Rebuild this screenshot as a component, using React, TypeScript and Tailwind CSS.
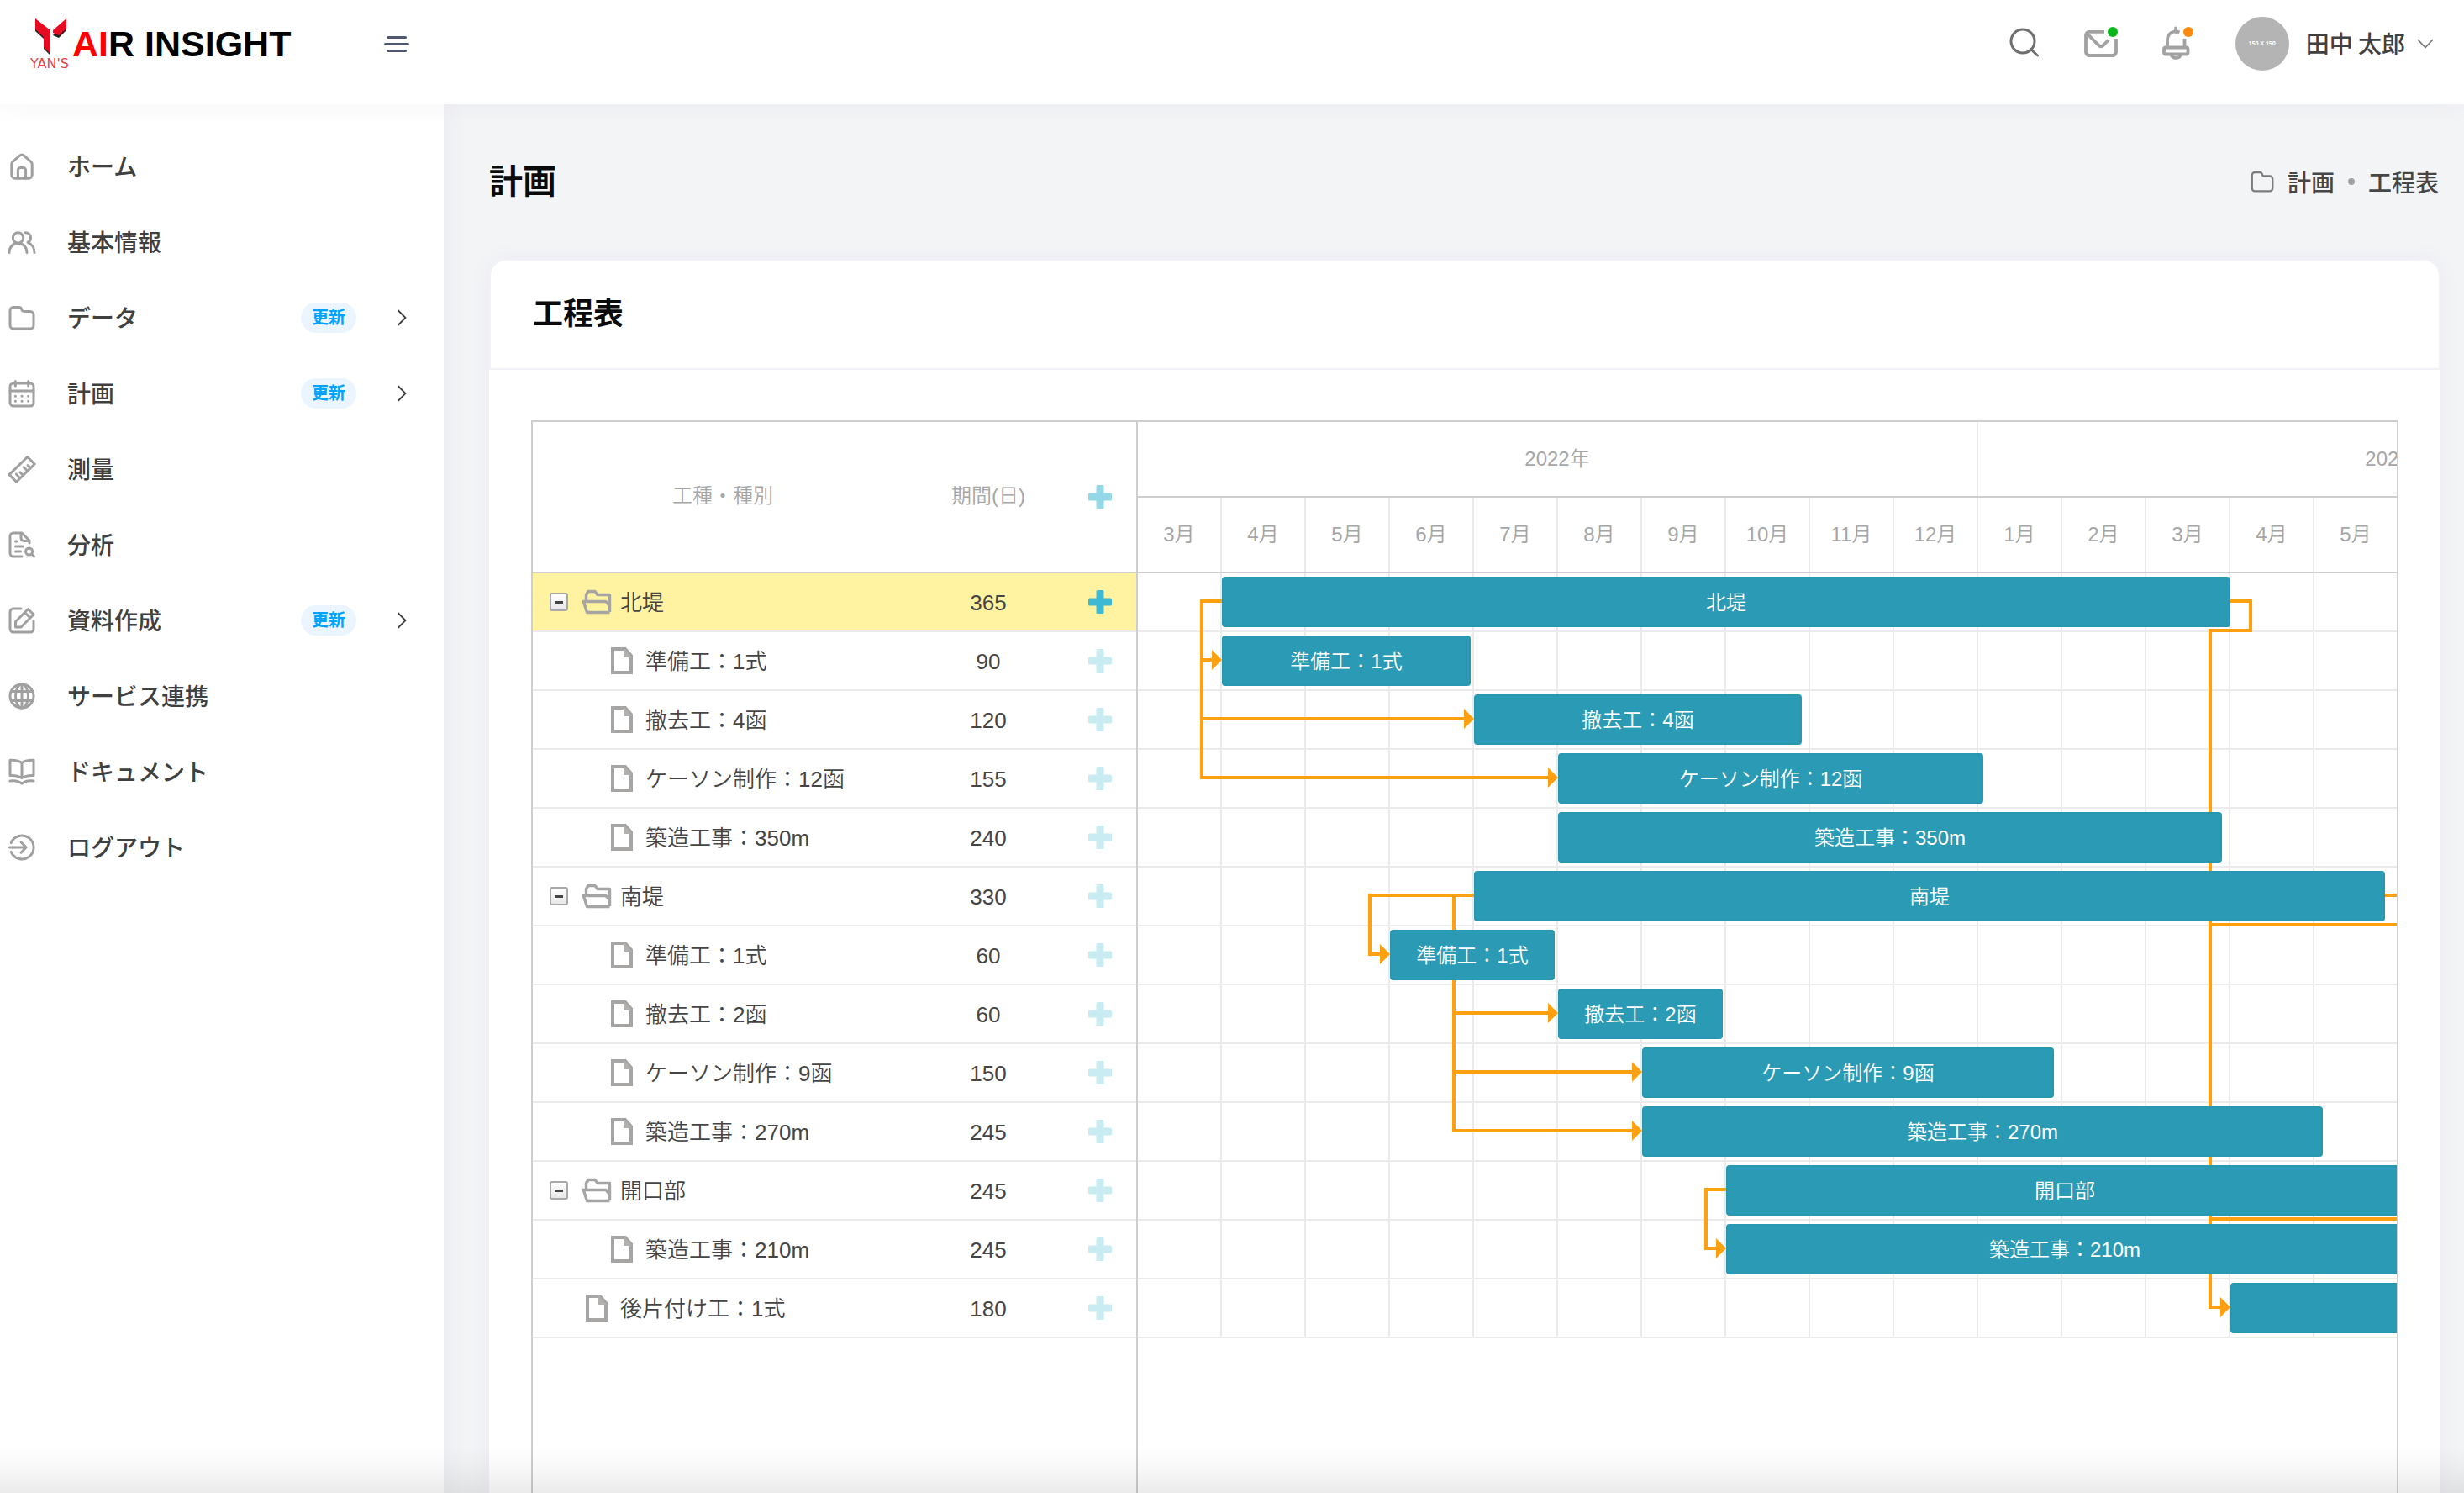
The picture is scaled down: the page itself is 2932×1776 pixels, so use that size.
import React, { useState } from "react";
import { clsx } from "clsx";

/* -------------------------------------------------------------------------- */
/*                                    Data                                    */
/* -------------------------------------------------------------------------- */

type IconName =
  | "home"
  | "users"
  | "folder"
  | "calendar"
  | "ruler"
  | "report"
  | "edit"
  | "globe"
  | "book"
  | "logout";

type Task = {
  id: number;
  name: string;
  days: number;
  kind: "group" | "child" | "single";
  start: number;
  width: number;
};

const menu: { label: string; icon: IconName; updated?: boolean }[] = [
  { label: "ホーム", icon: "home" },
  { label: "基本情報", icon: "users" },
  { label: "データ", icon: "folder", updated: true },
  { label: "計画", icon: "calendar", updated: true },
  { label: "測量", icon: "ruler" },
  { label: "分析", icon: "report" },
  { label: "資料作成", icon: "edit", updated: true },
  { label: "サービス連携", icon: "globe" },
  { label: "ドキュメント", icon: "book" },
  { label: "ログアウト", icon: "logout" },
];

// start and width are in timeline pixels, one month is 100
const tasks: Task[] = [
  { id: 1, name: "北堤", days: 365, kind: "group", start: 100, width: 1200 },
  { id: 2, name: "準備工：1式", days: 90, kind: "child", start: 100, width: 296 },
  { id: 3, name: "撤去工：4函", days: 120, kind: "child", start: 400, width: 390 },
  { id: 4, name: "ケーソン制作：12函", days: 155, kind: "child", start: 500, width: 506 },
  { id: 5, name: "築造工事：350m", days: 240, kind: "child", start: 500, width: 790 },
  { id: 6, name: "南堤", days: 330, kind: "group", start: 400, width: 1084 },
  { id: 7, name: "準備工：1式", days: 60, kind: "child", start: 300, width: 196 },
  { id: 8, name: "撤去工：2函", days: 60, kind: "child", start: 500, width: 196 },
  { id: 9, name: "ケーソン制作：9函", days: 150, kind: "child", start: 600, width: 490 },
  { id: 10, name: "築造工事：270m", days: 245, kind: "child", start: 600, width: 810 },
  { id: 11, name: "開口部", days: 245, kind: "group", start: 700, width: 806 },
  { id: 12, name: "築造工事：210m", days: 245, kind: "child", start: 700, width: 806 },
  { id: 13, name: "後片付け工：1式", days: 180, kind: "single", start: 1300, width: 590 },
];

const years = ["2022年", "2023年"];
const months = [3, 4, 5, 6, 7, 8, 9, 10, 11, 12, 1, 2, 3, 4, 5];

const links = [
  "M100 33H76V103H88",
  "M76 103V173H388",
  "M76 173V243H488",
  "M400 383H276V453H288",
  "M376 383V523H488",
  "M376 523V593H588",
  "M376 593V663H588",
  "M700 733H676V803H688",
  "M1300 33H1324V68H1276V873H1288",
  "M1484 383H1508V418H1276",
  "M1506 768H1276",
];

const arrows = [
  [100, 103],
  [400, 173],
  [500, 243],
  [300, 453],
  [500, 523],
  [600, 593],
  [600, 663],
  [700, 803],
  [1300, 873],
];

/* -------------------------------------------------------------------------- */
/*                                   Icons                                    */
/* -------------------------------------------------------------------------- */

const FOLDER =
  "M6 3.4h6.6c1.6 0 2.5.7 2.9 2l.5 1.5c.4 1.2 1.1 1.7 2.4 1.7H26a4 4 0 0 1 4 4V25a4 4 0 0 1-4 4H6a4 4 0 0 1-4-4V7.4a4 4 0 0 1 4-4Z";

const iconShapes: Record<IconName, React.ReactNode> = {
  home: (
    <>
      <path d="M3.8 13.4a4 4 0 0 1 1.4-3l8.3-7.2a3.8 3.8 0 0 1 5 0l8.3 7.2a4 4 0 0 1 1.4 3v12.8a4 4 0 0 1-4 4H7.8a4 4 0 0 1-4-4Z" />
      <path d="M11.4 30V20.500a3 3 0 0 1 3-3h3.200a3 3 0 0 1 3 3V30" />
    </>
  ),
  users: (
    <>
      <circle cx="11.5" cy="11" r="6.2" />
      <path d="M1 28.500C1 21.800 5.700 17.300 11.500 17.300S22 21.800 22 28.500" />
      <path d="M20 4.800c4 0 6.600 2.900 6.600 6.100 0 2.600-1.500 4.500-3.600 5.500 4.800 1.800 8 6.500 8 12.100" />
    </>
  ),
  folder: <path d={FOLDER} />,
  calendar: (
    <>
      <rect x="2" y="4" width="28" height="27" rx="4" />
      <path d="M2 13h28M8.300 1.500V7M23.700 1.500V7" />
      <path d="M8.300 19.200h.1M16 19.200h.1M23.600 19.200h.1M8.300 25.200h.1M16 25.200h.1M23.600 25.200h.1" />
    </>
  ),
  ruler: (
    <>
      <path d="M22.700 1.500 31.200 10 9.600 31.200 1 22.600Z" />
      <path d="m9.400 22 3.700 4.200M14 19.800l2.200 2.300M18.200 13.800l4 4M23 11.500l2.300 2.200" />
    </>
  ),
  report: (
    <>
      <path d="M16 30H6a4 4 0 0 1-4-4V6a4 4 0 0 1 4-4h10l9 9v3" />
      <path d="M15 2.500V8a3.500 3.500 0 0 0 3.500 3.500H24M8.500 12h1.500M8.500 18h9M8.500 24h6" />
      <circle cx="24.6" cy="24" r="4" />
      <path d="m27.600 27 3 3" />
    </>
  ),
  edit: (
    <>
      <path d="M15 2H6a4 4 0 0 0-4 4v20a4 4 0 0 0 4 4h20a4 4 0 0 0 4-4v-9" />
      <path d="M8.500 17.500 23.500 2.500l6.500 6.500-15 15H8.500ZM19.500 6.500 26 13" />
    </>
  ),
  globe: (
    <>
      <circle cx="16" cy="16" r="14" />
      <ellipse cx="16" cy="16" rx="7.5" ry="14" />
      <path d="M16 2v28M4 10.500h24M4 21.500h24" />
    </>
  ),
  book: (
    <>
      <path d="M16 5.500C13 3 7.500 2 2 2.200V20.500c5.500-.2 11 .7 14 3.200 3-2.500 8.500-3.400 14-3.200V2.200C24.500 2 19 3 16 5.500ZM16 5.500v18" />
      <path d="M2 27c5.500-.6 10.500 0 14 3.200 3.500-3.200 8.500-3.800 14-3.200" />
    </>
  ),
  logout: (
    <>
      <path d="M3.200 10.500a14 14 0 1 1 0 11" />
      <path d="M1.500 16H21M15 9.800 21.200 16 15 22.200" />
    </>
  ),
};

function Icon({ name }: { name: IconName }) {
  return (
    <svg
      viewBox="0 0 32 32"
      className="size-8 shrink-0 overflow-visible text-[#a0a0a0]"
      fill="none"
      stroke="currentColor"
      strokeWidth="3"
      strokeLinecap="round"
      strokeLinejoin="round"
    >
      {iconShapes[name]}
    </svg>
  );
}

function PlusIcon() {
  return (
    <svg viewBox="0 0 28 28" className="size-7" fill="currentColor">
      <rect x="9.5" width="9" height="28" rx="1.5" />
      <rect y="9.5" width="28" height="9" rx="1.5" />
    </svg>
  );
}

function OpenFolderIcon() {
  return (
    <svg viewBox="0 0 36 30" className="h-[30px] w-9" fill="none" stroke="#a6a5a3" strokeWidth="3.4" strokeLinejoin="round">
      <path d="M5.500 13.500V6.500L8 2.500H16L19 6.500H33.500V27" />
      <path d="M1 14.500H29L33.500 20M2.500 15 6.500 27.500H33.500" />
    </svg>
  );
}

function FileIcon() {
  return (
    <svg viewBox="0 0 26 32" className="h-8 w-[26px]">
      <path d="M2 2H17L24 10V30H2Z" fill="#fff" stroke="#a6a5a3" strokeWidth="4" />
      <path d="M15 1V12H25Z" fill="#b1b0ae" />
    </svg>
  );
}

/* -------------------------------------------------------------------------- */
/*                                   Header                                   */
/* -------------------------------------------------------------------------- */

function Header() {
  return (
    <header className="relative z-20 flex h-[124px] shrink-0 items-center justify-between bg-white pb-5 shadow-[0_0_30px_rgba(82,63,125,0.05)]">
      <div className="flex w-[528px] items-center justify-between pr-[41px] pl-9">
        <a href="#" className="flex items-center">
          <span className="flex h-[60px] w-[50px] flex-col justify-between">
            <svg viewBox="0 0 50 44" className="h-11 w-[50px] shrink-0">
              <path d="M6 2 24 16V44L16 36V24L6 15Z" fill="#222" />
              <path d="M43 2V14L34 23 27 20Z" fill="#222" />
              <path d="M6 0 24 14V42L16 34V22L6 13Z" fill="#e60a22" />
              <path d="M43 0V12L34 20 27 17V14Z" fill="#e60a22" />
            </svg>
            <span className="font-['DejaVu_Sans'] text-[16px] leading-[12px] text-[#e8404a]">YAN'S</span>
          </span>
          <span className="font-['Liberation_Sans'] text-[43px] leading-[48px] font-bold whitespace-nowrap text-black">
            <span className="text-[#ff0000]">AI</span>R INSIGHT
          </span>
        </a>
        <button aria-label="メニュー" className="flex flex-col items-center gap-[5px]">
          <span className="h-[3px] w-6 rounded-full bg-[#505870]" />
          <span className="h-[3px] w-[30px] rounded-full bg-[#505870]" />
          <span className="h-[3px] w-6 rounded-full bg-[#505870]" />
        </button>
      </div>

      {/* User actions */}
      <div className="flex items-center gap-[50px] pr-9">
        <button aria-label="検索">
          <svg viewBox="0 0 40 40" className="size-10" fill="none" stroke="#6f6f6f" strokeWidth="3" strokeLinecap="round">
            <circle cx="17" cy="17" r="14" />
            <path d="m27 27 7.500 7" />
          </svg>
        </button>
        <button aria-label="メール">
          <svg viewBox="0 0 40 40" className="size-10" fill="none" stroke="#a2a2a2" strokeWidth="3.8">
            <path d="M24 5.800H6a4 4 0 0 0-4 4V30a4 4 0 0 0 4 4h28a4 4 0 0 0 4-4V14" />
            <path d="m4.500 9 13 13.200a3.500 3.500 0 0 0 5 0L29 15.500" />
            <circle cx="34" cy="6" r="6" fill="#0ab81e" stroke="none" />
          </svg>
        </button>
        <button aria-label="通知">
          <svg viewBox="0 0 40 40" className="size-10 overflow-visible" fill="none" stroke="#a2a2a2" strokeWidth="3.8">
            <path d="M19 1.500V6" strokeLinecap="round" />
            <path d="M9 24V15.500a10 10 0 0 1 14.500-9M29.500 14v10" />
            <rect x="5" y="24.5" width="28.5" height="8" rx="2" />
            <path d="M13.500 33a6 5.500 0 0 0 11.500 0" />
            <circle cx="34" cy="6" r="6" fill="#ff8a0c" stroke="none" />
          </svg>
        </button>
        <button className="flex items-center">
          <span className="flex size-16 items-center justify-center rounded-full bg-[#b4b4b4] font-['Open_Sans'] text-[7px] font-bold text-white">
            150 X 150
          </span>
          <span className="ml-5 pb-[2px] text-[28px] leading-10 font-medium whitespace-nowrap text-[#3f4040]">
            田中 太郎
          </span>
          <svg viewBox="0 0 20 12" className="ml-[14px] h-3 w-5" fill="none" stroke="#777" strokeWidth="1.8">
            <path d="m1 1 9 9.500L19 1" />
          </svg>
        </button>
      </div>
    </header>
  );
}

/* -------------------------------------------------------------------------- */
/*                                   Sidebar                                  */
/* -------------------------------------------------------------------------- */

function Sidebar() {
  return (
    <nav className="relative z-10 w-[528px] shrink-0 bg-white pt-[29px] shadow-[0_0_30px_rgba(82,63,125,0.06)]">
      <ul>
        {menu.map((item) => (
          <li key={item.label}>
            <a href="#" className="flex h-[90px] items-center pr-[44px] pl-[10px]">
              <Icon name={item.icon} />
              <span className="ml-[38px] flex-1 pb-[2px] text-[28px] leading-10 font-medium text-[#3f4040]">
                {item.label}
              </span>
              {item.updated && (
                <>
                  <span className="flex h-9 w-[66px] items-center justify-center rounded-full bg-[#ebf5ff] pb-[2px] text-[20px] leading-6 font-bold text-[#00a3ff]">
                    更新
                  </span>
                  <svg viewBox="0 0 12 20" className="ml-12 h-5 w-3" fill="none" stroke="#3f4040" strokeWidth="1.8">
                    <path d="m1.500 1 9 9-9 9" />
                  </svg>
                </>
              )}
            </a>
          </li>
        ))}
      </ul>
    </nav>
  );
}

/* -------------------------------------------------------------------------- */
/*                                 Gantt chart                                */
/* -------------------------------------------------------------------------- */

function TaskGrid({ selected, onSelect }: { selected: number; onSelect: (id: number) => void }) {
  return (
    <div className="w-[720px] shrink-0 border-r-2 border-[#cecece]">
      <table className="w-full table-fixed border-separate border-spacing-0">
        <thead>
          <tr className="h-[180px] text-[24px] leading-8 text-[#a6a6a6]">
            <th className="w-[452px] border-b-2 border-[#cecece] pb-[2px] text-center font-[350]">工種・種別</th>
            <th className="w-[180px] border-b-2 border-[#cecece] pb-[2px] text-center font-[350]">期間(日)</th>
            <th className="border-b-2 border-[#cecece]">
              <button aria-label="追加" className="flex w-full justify-center text-[#94d7e6]">
                <PlusIcon />
              </button>
            </th>
          </tr>
        </thead>
        <tbody>
          {tasks.map((task) => (
            <tr
              key={task.id}
              onClick={() => onSelect(task.id)}
              className={clsx(
                "h-[70px] text-[26px] leading-8 text-[#454545]",
                task.id === selected && "bg-[#fff3a1]",
              )}
            >
              <td className="border-b-2 border-[#ebebeb] font-[350]">
                <div className={clsx("flex items-center", task.kind === "child" ? "pl-11" : "pl-[14px]")}>
                  <span className="flex w-[34px] justify-center">
                    {task.kind === "group" && (
                      <button
                        aria-label="折りたたむ"
                        className="flex size-[22px] items-center justify-center rounded-[3px] border-2 border-[#a9a9a9] bg-linear-to-b from-white to-[#e8e8e8]"
                      >
                        <span className="h-[3px] w-[10px] bg-[#444]" />
                      </button>
                    )}
                  </span>
                  <span className="flex w-14 justify-center">
                    {task.kind === "group" ? <OpenFolderIcon /> : <FileIcon />}
                  </span>
                  <span className="pt-[2px] whitespace-nowrap">{task.name}</span>
                </div>
              </td>
              <td className="border-b-2 border-[#ebebeb] pt-[2px] text-center">{task.days}</td>
              <td className="border-b-2 border-[#ebebeb]">
                <button
                  aria-label="追加"
                  className={clsx(
                    "flex w-full justify-center",
                    task.id === selected ? "text-[#3db9d3]" : "text-[#c9ebf2]",
                  )}
                >
                  <PlusIcon />
                </button>
              </td>
            </tr>
          ))}
        </tbody>
      </table>
    </div>
  );
}

function Timeline() {
  return (
    <div className="min-w-0 flex-1 overflow-hidden text-[24px] leading-8 font-[350]">
      {/* Scale */}
      <div className="flex h-[90px] border-b-2 border-[#cecece] text-[#a6a6a6]">
        {years.map((year) => (
          <div key={year} className="flex w-[1000px] shrink-0 items-center justify-center border-r-2 border-[#ebebeb]">
            {year}
          </div>
        ))}
      </div>
      <div className="flex h-[90px] border-b-2 border-[#cecece] text-[#a6a6a6]">
        {months.map((month, i) => (
          <div key={i} className="flex w-[100px] shrink-0 items-center justify-center border-r-2 border-[#ebebeb]">
            {month}月
          </div>
        ))}
      </div>

      {/* Bars */}
      <div className="relative">
        <div className="absolute inset-0 flex">
          {months.map((_, i) => (
            <div key={i} className="w-[100px] shrink-0 border-r-2 border-[#ebebeb]" />
          ))}
        </div>
        {tasks.map((task) => (
          <div key={task.id} className="flex h-[70px] items-center border-b-2 border-[#ebebeb]">
            <div
              className="relative z-10 flex h-[60px] shrink-0 items-center justify-center rounded-[4px] border-2 border-[#2898b0] bg-[#2b9bb5] pt-[2px] whitespace-nowrap text-white"
              style={{ marginLeft: task.start, width: task.width }}
            >
              {task.name}
            </div>
          </div>
        ))}
        <svg className="absolute top-0 left-0 h-full w-full" fill="none">
          {links.map((d) => (
            <path key={d} d={d} stroke="#ffa011" strokeWidth="4" strokeLinecap="square" />
          ))}
          {arrows.map(([x, y]) => (
            <path key={`${x}-${y}`} d={`M${x - 12} ${y - 12}L${x} ${y}L${x - 12} ${y + 12}Z`} fill="#ffa011" />
          ))}
        </svg>
      </div>
    </div>
  );
}

function Gantt() {
  const [selected, setSelected] = useState(1);

  return (
    <div className="flex flex-1 border-2 border-b-0 border-[#cecece] font-['Liberation_Sans','Noto_Sans_CJK_JP',sans-serif]">
      <TaskGrid selected={selected} onSelect={setSelected} />
      <Timeline />
    </div>
  );
}

/* -------------------------------------------------------------------------- */
/*                                    Page                                    */
/* -------------------------------------------------------------------------- */

export default function App() {
  return (
    <div
      lang="ja"
      className="relative flex h-screen flex-col overflow-hidden bg-[#f3f4f6] font-['Noto_Sans_CJK_JP',sans-serif]"
    >
      <Header />
      <div className="flex min-h-0 flex-1">
        <Sidebar />
        <main className="flex min-w-0 flex-1 flex-col pr-7 pl-[54px]">
          <div className="flex h-[184px] shrink-0 items-center justify-between">
            <h1 className="pb-[6px] text-[40px] leading-[56px] font-bold text-[#0b0b0b]">計画</h1>
            <div className="flex items-center pr-[2px] text-[28px] leading-10 font-medium text-[#464646]">
              <svg viewBox="0 0 32 32" className="mr-4 size-7" fill="none" stroke="#7c7c7c" strokeWidth="2.7">
                <path d={FOLDER} />
              </svg>
              <a href="#">計画</a>
              <span className="mx-4 size-2 rounded-full bg-[#a2a2a2]" />
              <span>工程表</span>
            </div>
          </div>

          <section className="flex flex-1 flex-col rounded-t-[20px] bg-white shadow-[0_0_30px_rgba(82,63,155,0.04)]">
            <div className="flex h-[132px] shrink-0 items-center rounded-t-[20px] border-2 border-[#f1f1f7] px-[50px] pb-2">
              <h2 className="text-[36px] leading-[52px] font-bold text-[#0b0b0b]">工程表</h2>
            </div>
            <div className="flex flex-1 flex-col px-[50px] pt-[60px]">
              <Gantt />
            </div>
          </section>
        </main>
      </div>
      <div className="pointer-events-none absolute inset-x-0 bottom-0 z-30 h-14 bg-linear-to-t from-black/8 via-black/3 to-transparent" />
    </div>
  );
}
